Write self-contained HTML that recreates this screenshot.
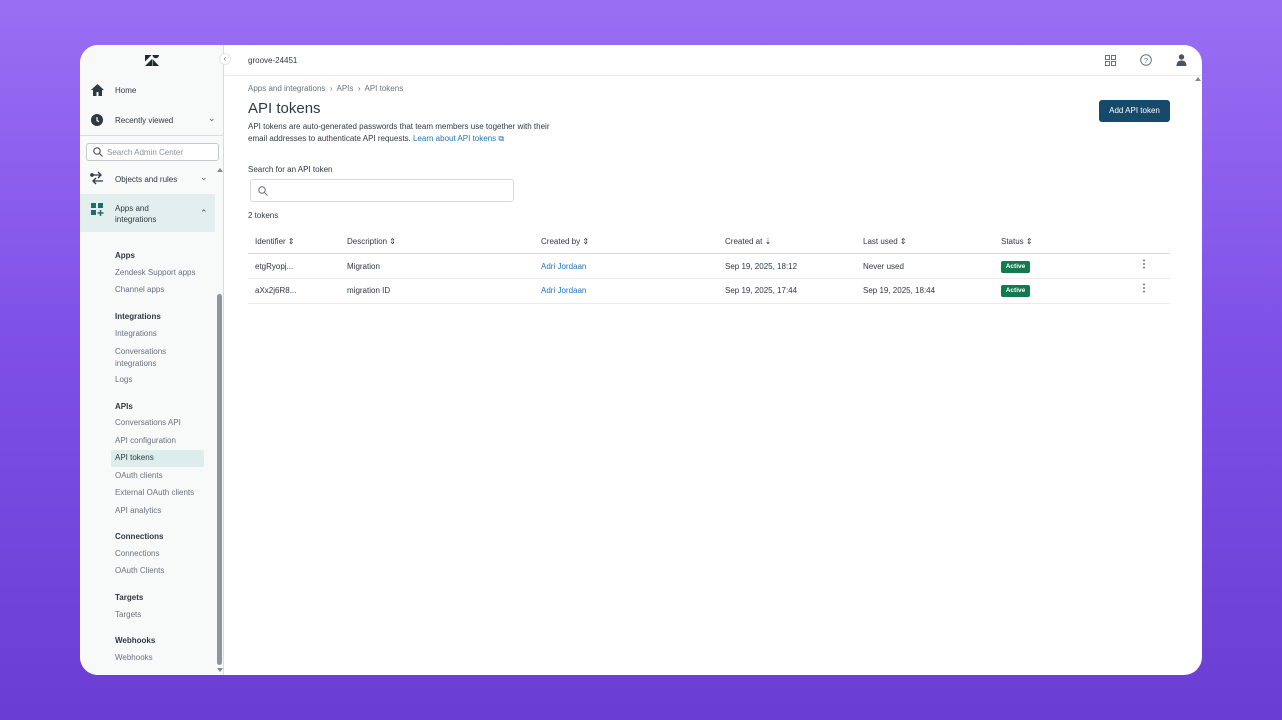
<!DOCTYPE html>
<html><head><meta charset="utf-8"><style>
*{box-sizing:border-box;margin:0;padding:0}
body{width:1282px;height:720px;overflow:hidden;font-family:"Liberation Sans",sans-serif;background:linear-gradient(180deg,#9a6ff3 0%,#7c4fe6 50%,#6a3ed2 100%);position:relative;color:#2f3941}
.win{position:absolute;left:80px;top:45px;width:1122px;height:630px;background:#fff;border-radius:18px;overflow:hidden}
.side{position:absolute;left:0;top:0;width:144px;height:630px;background:#f8f9f9;border-right:1px solid #d8dcde}
.t{position:absolute;font-size:8px;white-space:nowrap}
.b{font-weight:bold;color:#2f3941}
.s{color:#68737d}
.top{position:absolute;left:145px;top:0;right:0;height:31px;border-bottom:1px solid #e9ebed}
</style></head><body>
<div class="win">
<div class="side">
 <svg style="position:absolute;left:65px;top:10px" width="14" height="11" viewBox="0 0 14 11"><path d="M0 0h6.5L0 6.5z" fill="#1f2b2e"/><path d="M7 4v7H0z" fill="#1f2b2e"/><path d="M7.5 11v-7l6.5 7z" fill="#1f2b2e"/><path d="M7.5 0h6.5a3.25 3.25 0 0 1-6.5 0z" fill="#1f2b2e"/></svg>
 <div style="position:absolute;left:139px;top:8px;width:12px;height:12px;border-radius:50%;background:#fff;border:1px solid #e5e5e5;font-size:8px;line-height:10px;text-align:center;color:#666">‹</div>
 <svg style="position:absolute;left:11px;top:39px" width="13" height="12" viewBox="0 0 13 12"><path d="M6.5 0L0 6h2v6h3.5V8h2v4H11V6h2z" fill="#2f3941"/></svg>
 <div class="t" style="left:35px;top:41px;color:#2f3941">Home</div>
 <svg style="position:absolute;left:11px;top:69px" width="12" height="12"><circle cx="6" cy="6" r="6" fill="#2f3941"/><path d="M6 3v3.5l2 1.2" stroke="#fff" stroke-width="1.2" fill="none"/></svg>
 <div class="t" style="left:35px;top:71px;color:#2f3941">Recently viewed</div>
 <div class="t" style="left:128px;top:68px;color:#555;font-size:9px">⌄</div>
 <div style="position:absolute;left:0;top:90px;width:144px;height:1px;background:#d8dcde"></div>
 <div style="position:absolute;left:6px;top:98px;width:133px;height:18px;border:1px solid #c2c8cc;border-radius:3px;background:#fff"></div>
 <svg style="position:absolute;left:13px;top:102px" width="10" height="10"><circle cx="4" cy="4" r="3.2" stroke="#555" fill="none" stroke-width="1.2"/><path d="M6.5 6.5L9.5 9.5" stroke="#555" stroke-width="1.2"/></svg>
 <div class="t" style="left:27px;top:103px;color:#87929d;font-size:8px">Search Admin Center</div>
 <svg style="position:absolute;left:10px;top:126px" width="14" height="14" viewBox="0 0 14 14" fill="none" stroke="#2f3941" stroke-width="1.3"><path d="M1 4h10M8 1l3 3-3 3M13 10H3M6 7l-3 3 3 3"/><circle cx="2" cy="4" r="1.2"/></svg>
 <div class="t" style="left:35px;top:130px;color:#2f3941">Objects and rules</div>
 <div class="t" style="left:120px;top:127px;color:#555;font-size:9px">⌄</div>
 <div style="position:absolute;left:137px;top:123px;width:0;height:0;border:3px solid transparent;border-bottom:4px solid #888;border-top:0"></div>
 <div style="position:absolute;left:0;top:149px;width:135px;height:38px;background:#e3efee"></div>
 <svg style="position:absolute;left:11px;top:158px" width="13" height="13"><rect x="0" y="0" width="5" height="5" fill="#1f6e65"/><rect x="7" y="0" width="5" height="5" fill="#1f6e65"/><rect x="0" y="7" width="5" height="5" fill="#1f6e65"/><path d="M9.5 7v6M6.5 10h6" stroke="#1f6e65" stroke-width="1.5"/></svg>
 <div class="t" style="left:35px;top:158px;color:#2f3941;line-height:11px">Apps and<br>integrations</div>
 <div class="t" style="left:120px;top:163px;color:#555;font-size:9px">⌃</div>
 <div style="position:absolute;left:137px;top:249px;width:5px;height:371px;background:#8f9599;border-radius:3px"></div>
 <div style="position:absolute;left:137px;top:623px;width:0;height:0;border:3px solid transparent;border-top:4px solid #888;border-bottom:0"></div>
 <div style="position:absolute;left:31px;top:405px;width:93px;height:17px;background:#dceeeb;border-radius:2px"></div>
 <div class="t b" style="left:35px;top:206px">Apps</div>
 <div class="t s" style="left:35px;top:223px">Zendesk Support apps</div>
 <div class="t s" style="left:35px;top:240px">Channel apps</div>
 <div class="t b" style="left:35px;top:267px">Integrations</div>
 <div class="t s" style="left:35px;top:284px">Integrations</div>
 <div class="t s" style="left:35px;top:301px;line-height:12px">Conversations<br>integrations</div>
 <div class="t s" style="left:35px;top:330px">Logs</div>
 <div class="t b" style="left:35px;top:357px">APIs</div>
 <div class="t s" style="left:35px;top:373px">Conversations API</div>
 <div class="t s" style="left:35px;top:391px">API configuration</div>
 <div class="t" style="left:35px;top:408px;color:#2f3941">API tokens</div>
 <div class="t s" style="left:35px;top:426px">OAuth clients</div>
 <div class="t s" style="left:35px;top:443px">External OAuth clients</div>
 <div class="t s" style="left:35px;top:461px">API analytics</div>
 <div class="t b" style="left:35px;top:487px">Connections</div>
 <div class="t s" style="left:35px;top:504px">Connections</div>
 <div class="t s" style="left:35px;top:521px">OAuth Clients</div>
 <div class="t b" style="left:35px;top:548px">Targets</div>
 <div class="t s" style="left:35px;top:565px">Targets</div>
 <div class="t b" style="left:35px;top:591px">Webhooks</div>
 <div class="t s" style="left:35px;top:608px">Webhooks</div>
</div>
<div class="top">
 <div class="t" style="left:23px;top:11px;color:#2f3941">groove-24451</div>
 <svg style="position:absolute;left:880px;top:10px" width="11" height="11" fill="none" stroke="#68737d"><rect x=".5" y=".5" width="4" height="4"/><rect x="6.5" y=".5" width="4" height="4"/><rect x=".5" y="6.5" width="4" height="4"/><rect x="6.5" y="6.5" width="4" height="4"/></svg>
 <svg style="position:absolute;left:915px;top:9px" width="12" height="12"><circle cx="6" cy="6" r="5.3" stroke="#68737d" fill="none"/><text x="6" y="9" font-size="7.5" text-anchor="middle" fill="#68737d" font-family="Liberation Sans">?</text></svg>
 <svg style="position:absolute;left:951px;top:9px" width="11" height="12"><circle cx="5.5" cy="3" r="2.7" fill="#4a555e"/><path d="M0.5 12c0-4 2-5.5 5-5.5s5 1.5 5 5.5z" fill="#4a555e"/></svg>
</div>
<div style="position:absolute;left:1115px;top:32px;width:0;height:0;border:3px solid transparent;border-bottom:4px solid #888;border-top:0"></div>
<div class="t" style="left:168px;top:39px;color:#68737d">Apps and integrations &nbsp;›&nbsp; APIs &nbsp;›&nbsp; API tokens</div>
<div class="t" style="left:168px;top:55px;font-size:15px;color:#2f3941">API tokens</div>
<div class="t" style="left:168px;top:76px;line-height:11.5px;color:#2f3941;font-size:8px">API tokens are auto-generated passwords that team members use together with their<br>email addresses to authenticate API requests. <span style="color:#1f73b7">Learn about API tokens ⧉</span></div>
<div style="position:absolute;left:1019px;top:55px;width:71px;height:22px;background:#17496b;border-radius:3px;color:#fff;font-size:8px;line-height:22px;text-align:center">Add API token</div>
<div class="t" style="left:168px;top:120px;color:#2f3941;font-size:8px">Search for an API token</div>
<div style="position:absolute;left:170px;top:134px;width:264px;height:23px;border:1px solid #d8dcde;border-radius:3px"></div>
<svg style="position:absolute;left:178px;top:141px" width="10" height="10"><circle cx="4" cy="4" r="3.2" stroke="#68737d" fill="none"/><path d="M6.5 6.5L9.5 9.5" stroke="#68737d"/></svg>
<div class="t" style="left:168px;top:166px;color:#2f3941;font-size:8px">2 tokens</div>
<div style="position:absolute;left:168px;top:208px;width:922px;height:1px;background:#d8dcde"></div>
<div style="position:absolute;left:168px;top:233px;width:922px;height:1px;background:#e9ebed"></div>
<div style="position:absolute;left:168px;top:258px;width:922px;height:1px;background:#e9ebed"></div>
<div class="t" style="left:175px;top:192px;font-size:8px">Identifier ⇕</div>
<div class="t" style="left:267px;top:192px;font-size:8px">Description ⇕</div>
<div class="t" style="left:461px;top:192px;font-size:8px">Created by ⇕</div>
<div class="t" style="left:645px;top:192px;font-size:8px">Created at ⇣</div>
<div class="t" style="left:783px;top:192px;font-size:8px">Last used ⇕</div>
<div class="t" style="left:921px;top:192px;font-size:8px">Status ⇕</div>
<div class="t" style="left:175px;top:217px;font-size:8px">etgRyopj...</div>
<div class="t" style="left:267px;top:217px;font-size:8px">Migration</div>
<div class="t" style="left:461px;top:217px;font-size:8px;color:#1f73b7">Adri Jordaan</div>
<div class="t" style="left:645px;top:217px;font-size:8px">Sep 19, 2025, 18:12</div>
<div class="t" style="left:783px;top:217px;font-size:8px">Never used</div>
<div style="position:absolute;left:921px;top:216px;width:29px;height:12px;background:#117a4f;color:#fff;font-size:6.5px;line-height:12px;text-align:center;font-weight:bold;border-radius:2px">Active</div>
<div class="t" style="left:1059px;top:214px;font-size:10px;font-weight:bold;color:#555">⋮</div>
<div class="t" style="left:175px;top:241px;font-size:8px">aXx2j6R8...</div>
<div class="t" style="left:267px;top:241px;font-size:8px">migration ID</div>
<div class="t" style="left:461px;top:241px;font-size:8px;color:#1f73b7">Adri Jordaan</div>
<div class="t" style="left:645px;top:241px;font-size:8px">Sep 19, 2025, 17:44</div>
<div class="t" style="left:783px;top:241px;font-size:8px">Sep 19, 2025, 18:44</div>
<div style="position:absolute;left:921px;top:240px;width:29px;height:12px;background:#117a4f;color:#fff;font-size:6.5px;line-height:12px;text-align:center;font-weight:bold;border-radius:2px">Active</div>
<div class="t" style="left:1059px;top:238px;font-size:10px;font-weight:bold;color:#555">⋮</div>
</div>
</body></html>
